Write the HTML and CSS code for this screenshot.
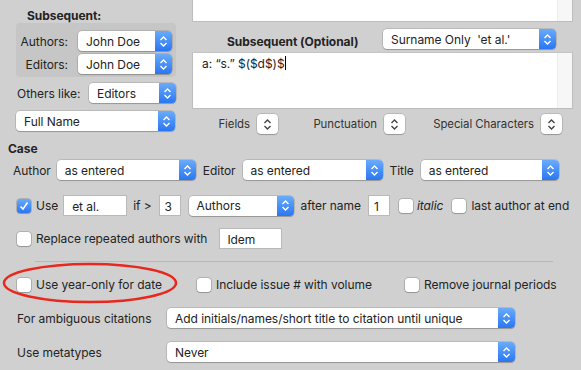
FILE: index.html
```html
<!DOCTYPE html>
<html lang="en">
<head>
    <meta charset="UTF-8">
    <title>Citation Options</title>
    <link rel="stylesheet" href="styles.css">
</head>
<body>
    <div class="page">
        <div class="top">
            <div class="left">
                <div class="title sub-title">Subsequent:</div>
                <div class="group">
                    <div class="grow">
                        <span class="glabel">Authors:</span>
                        <div class="popup w-name"><span class="ptext">John Doe</span><span class="arrows"><svg width="9" height="13" viewBox="0 0 9 13"><path d="M1.5 5 4.5 2 7.5 5M1.5 8 4.5 11 7.5 8"/></svg></span></div>
                    </div>
                    <div class="grow">
                        <span class="glabel">Editors:</span>
                        <div class="popup w-name"><span class="ptext">John Doe</span><span class="arrows"><svg width="9" height="13" viewBox="0 0 9 13"><path d="M1.5 5 4.5 2 7.5 5M1.5 8 4.5 11 7.5 8"/></svg></span></div>
                    </div>
                </div>
                <div class="others">
                    <span>Others like:</span>
                    <div class="popup w-others"><span class="ptext">Editors</span><span class="arrows"><svg width="9" height="13" viewBox="0 0 9 13"><path d="M1.5 5 4.5 2 7.5 5M1.5 8 4.5 11 7.5 8"/></svg></span></div>
                </div>
                <div class="popup w-full"><span class="ptext">Full Name</span><span class="arrows"><svg width="9" height="13" viewBox="0 0 9 13"><path d="M1.5 5 4.5 2 7.5 5M1.5 8 4.5 11 7.5 8"/></svg></span></div>
            </div>
            <div class="right">
                <div class="editor editor-top"><div class="scroller"></div></div>
                <div class="head-row">
                    <span class="title">Subsequent (Optional)</span>
                    <div class="popup w-surname"><span class="ptext">Surname Only&nbsp; 'et al.'</span><span class="arrows"><svg width="9" height="13" viewBox="0 0 9 13"><path d="M1.5 5 4.5 2 7.5 5M1.5 8 4.5 11 7.5 8"/></svg></span></div>
                </div>
                <div class="editor editor-main">
                    <div class="etext">a: “s.” $($d$)$<span class="caret"></span></div>
                    <div class="scroller"></div>
                </div>
                <div class="tools">
                    <div class="tool t-fields"><span>Fields</span><span class="stepper"><svg width="9" height="13" viewBox="0 0 9 13"><path d="M1.5 5 4.5 2 7.5 5M1.5 8 4.5 11 7.5 8"/></svg></span></div>
                    <div class="tool t-punct"><span>Punctuation</span><span class="stepper"><svg width="9" height="13" viewBox="0 0 9 13"><path d="M1.5 5 4.5 2 7.5 5M1.5 8 4.5 11 7.5 8"/></svg></span></div>
                    <div class="tool t-special"><span>Special Characters</span><span class="stepper"><svg width="9" height="13" viewBox="0 0 9 13"><path d="M1.5 5 4.5 2 7.5 5M1.5 8 4.5 11 7.5 8"/></svg></span></div>
                </div>
            </div>
        </div>

        <div class="title case-title">Case</div>
        <div class="row case-row">
            <span>Author</span>
            <div class="popup w-case1"><span class="ptext">as entered</span><span class="arrows"><svg width="9" height="13" viewBox="0 0 9 13"><path d="M1.5 5 4.5 2 7.5 5M1.5 8 4.5 11 7.5 8"/></svg></span></div>
            <span>Editor</span>
            <div class="popup w-case2"><span class="ptext">as entered</span><span class="arrows"><svg width="9" height="13" viewBox="0 0 9 13"><path d="M1.5 5 4.5 2 7.5 5M1.5 8 4.5 11 7.5 8"/></svg></span></div>
            <span>Title</span>
            <div class="popup w-case3"><span class="ptext">as entered</span><span class="arrows"><svg width="9" height="13" viewBox="0 0 9 13"><path d="M1.5 5 4.5 2 7.5 5M1.5 8 4.5 11 7.5 8"/></svg></span></div>
        </div>

        <div class="row use-row">
            <span class="check checked"><svg width="10" height="10" viewBox="0 0 10 10"><path d="M1.5 5.5 4 8 8.5 1.5"/></svg></span>
            <span class="l-use">Use</span>
            <span class="field w-etal">et al.</span>
            <span class="l-if">if &gt;</span>
            <span class="field w-num">3</span>
            <div class="popup w-authors"><span class="ptext">Authors</span><span class="arrows"><svg width="9" height="13" viewBox="0 0 9 13"><path d="M1.5 5 4.5 2 7.5 5M1.5 8 4.5 11 7.5 8"/></svg></span></div>
            <span class="l-after">after name</span>
            <span class="field w-num">1</span>
            <span class="check c-italic"></span>
            <span class="italic">italic</span>
            <span class="check c-last"></span>
            <span>last author at end</span>
        </div>

        <div class="row replace-row">
            <span class="check"></span>
            <span>Replace repeated authors with</span>
            <span class="field w-idem">Idem</span>
        </div>

        <div class="separator"></div>

        <div class="row checks-row">
            <div class="opt o-year"><span class="check"></span><span>Use year-only for date</span></div>
            <div class="opt o-issue"><span class="check"></span><span>Include issue # with volume</span></div>
            <div class="opt"><span class="check"></span><span>Remove journal periods</span></div>
        </div>

        <div class="row select-row ambiguous">
            <span class="slabel">For ambiguous citations</span>
            <div class="popup w-wide"><span class="ptext">Add initials/names/short title to citation until unique</span><span class="arrows"><svg width="9" height="13" viewBox="0 0 9 13"><path d="M1.5 5 4.5 2 7.5 5M1.5 8 4.5 11 7.5 8"/></svg></span></div>
        </div>
        <div class="row select-row metatypes">
            <span class="slabel">Use metatypes</span>
            <div class="popup w-wide"><span class="ptext">Never</span><span class="arrows"><svg width="9" height="13" viewBox="0 0 9 13"><path d="M1.5 5 4.5 2 7.5 5M1.5 8 4.5 11 7.5 8"/></svg></span></div>
        </div>

        <svg class="mark" width="176" height="42" viewBox="0 0 176 42"><ellipse cx="88" cy="21" rx="86" ry="19"/></svg>
    </div>
</body>
</html>
```

FILE: styles.css
```css
body {
    margin: 0;
    background: #d0d0d0;
    font-family: 'Inter', 'Liberation Sans', sans-serif;
    font-size: 12px;
    letter-spacing: -0.05px;
    color: #232323;
}
.page {
    position: relative;
    width: 581px;
    height: 370px;
    overflow: hidden;
}
.title { font-weight: bold; }

/* popup buttons */
.popup {
    display: flex;
    align-items: center;
    flex: none;
    height: 20px;
    background: #fff;
    border-radius: 4px;
    box-shadow: 0 0 0 0.5px rgba(0, 0, 0, 0.22), 0 1px 1px rgba(0, 0, 0, 0.18);
    box-sizing: border-box;
}
.ptext {
    flex: 1;
    padding-left: 8px;
    white-space: nowrap;
    overflow: hidden;
}
.arrows {
    width: 17px;
    height: 20px;
    display: flex;
    align-items: center;
    justify-content: center;
    border-radius: 0 4px 4px 0;
    background: linear-gradient(#6aabf9, #2a76f3);
}
.arrows path, .stepper path {
    fill: none;
    stroke: #fff;
    stroke-width: 1.4;
}
.stepper path { stroke: #444; }

/* top area */
.top { display: flex; }
.left {
    width: 160px;
    margin-left: 16px;
}
.sub-title {
    margin: 8px 0 0 11px;
    height: 15px;
    line-height: 15px;
}
.group {
    background: #c6c6c6;
    border-radius: 4px;
    padding: 8px 4px 3px 0;
    display: flex;
    flex-direction: column;
    gap: 3px;
}
.grow {
    display: flex;
    align-items: center;
    gap: 10px;
}
.glabel {
    width: 52px;
    text-align: right;
}
.w-name { width: 94px; }
.others {
    display: flex;
    align-items: center;
    justify-content: space-between;
    margin-top: 6px;
    padding-left: 1px;
}
.w-others { width: 87px; }
.w-full { width: 159px; margin-top: 8px; }

.right {
    width: 381px;
    margin-left: 16px;
}
.editor {
    position: relative;
    background: #fff;
    border: 1px solid #bdbdbd;
    border-top: none;
    box-sizing: border-box;
}
.editor-top { height: 22px; }
.editor-main {
    height: 57px;
    margin-top: 3px;
    border-top: 1px solid #c4c4c4;
}
.scroller {
    position: absolute;
    top: 0;
    right: 0;
    bottom: 0;
    width: 14px;
    background: #f7f7f7;
    border-left: 1px solid #ececec;
}
.etext {
    padding: 3px 0 0 9px;
    line-height: 15px;
}
.caret {
    display: inline-block;
    width: 1px;
    height: 14px;
    background: #000;
    vertical-align: -2px;
}
.head-row {
    display: flex;
    align-items: flex-end;
    margin-top: 7px;
    padding-left: 35px;
}
.head-row .title { width: 156px; line-height: 15px; }
.w-surname { width: 173px; }

.tools {
    display: flex;
    margin-top: 5px;
    font-size: 11.4px;
    color: #333;
}
.tool {
    display: flex;
    align-items: center;
    justify-content: flex-end;
    gap: 7px;
}
.t-fields { width: 86px; }
.t-punct { width: 127px; }
.t-special { width: 157px; }
.stepper {
    width: 21px;
    height: 20px;
    display: flex;
    align-items: center;
    justify-content: center;
    background: #fff;
    border-radius: 4px;
    box-shadow: 0 0 0 0.5px rgba(0, 0, 0, 0.22), 0 1px 1px rgba(0, 0, 0, 0.18);
}

/* lower rows */
.case-title {
    margin: 7px 0 0 8px;
    height: 15px;
    line-height: 15px;
}
.row {
    display: flex;
    align-items: center;
    padding-left: 17px;
    white-space: nowrap;
}
.case-row {
    margin-top: 4px;
    padding-left: 13px;
    gap: 7px;
}
.case-row .popup:first-of-type { margin-left: -1px; }
.w-case1 { width: 139px; }
.w-case2 { width: 140px; }
.w-case3 { width: 138px; }

.check {
    width: 14px;
    height: 14px;
    flex: none;
    box-sizing: border-box;
    background: #fff;
    border-radius: 3px;
    box-shadow: 0 0 0 0.5px rgba(0, 0, 0, 0.3), 0 1px 1px rgba(0, 0, 0, 0.15);
    display: flex;
    align-items: center;
    justify-content: center;
}
.checked { background: linear-gradient(#6aabf9, #2a76f3); }
.checked path {
    fill: none;
    stroke: #fff;
    stroke-width: 1.6;
}
.field {
    height: 21px;
    line-height: 21px;
    flex: none;
    background: #fff;
    border: 1px solid #b9b9b9;
    box-sizing: border-box;
    padding-left: 7px;
}
.use-row { margin-top: 15px; }
.l-use { margin-left: 5px; }
.w-etal { width: 64px; margin-left: 5px; padding-left: 8px; }
.l-if { margin-left: 6px; }
.w-num { width: 22px; margin-left: 7px; padding-left: 5px; }
.w-authors { width: 105px; margin-left: 8px; }
.l-after { margin-left: 7px; }
.c-italic { margin-left: 9px; }
.italic { font-style: italic; margin-left: 4px; }
.c-last { margin-left: 9px; margin-right: 5px; }

.replace-row { margin-top: 12px; gap: 5px; }
.w-idem { width: 63px; margin-left: 7px; }

.separator {
    height: 1px;
    background: #b7b7b7;
    margin: 12px 28px 0 35px;
}
.checks-row { margin-top: 15px; }
.opt {
    display: flex;
    align-items: center;
    gap: 5px;
}
.o-year { width: 180px; }
.o-issue { width: 208px; }

.select-row { margin-top: 16px; }
.metatypes { margin-top: 14px; }
.slabel { width: 150px; }
.w-wide { width: 348px; }

.mark {
    position: absolute;
    left: 2px;
    top: 262px;
}
.mark ellipse {
    fill: none;
    stroke: #e8271d;
    stroke-width: 2.5;
}
```
